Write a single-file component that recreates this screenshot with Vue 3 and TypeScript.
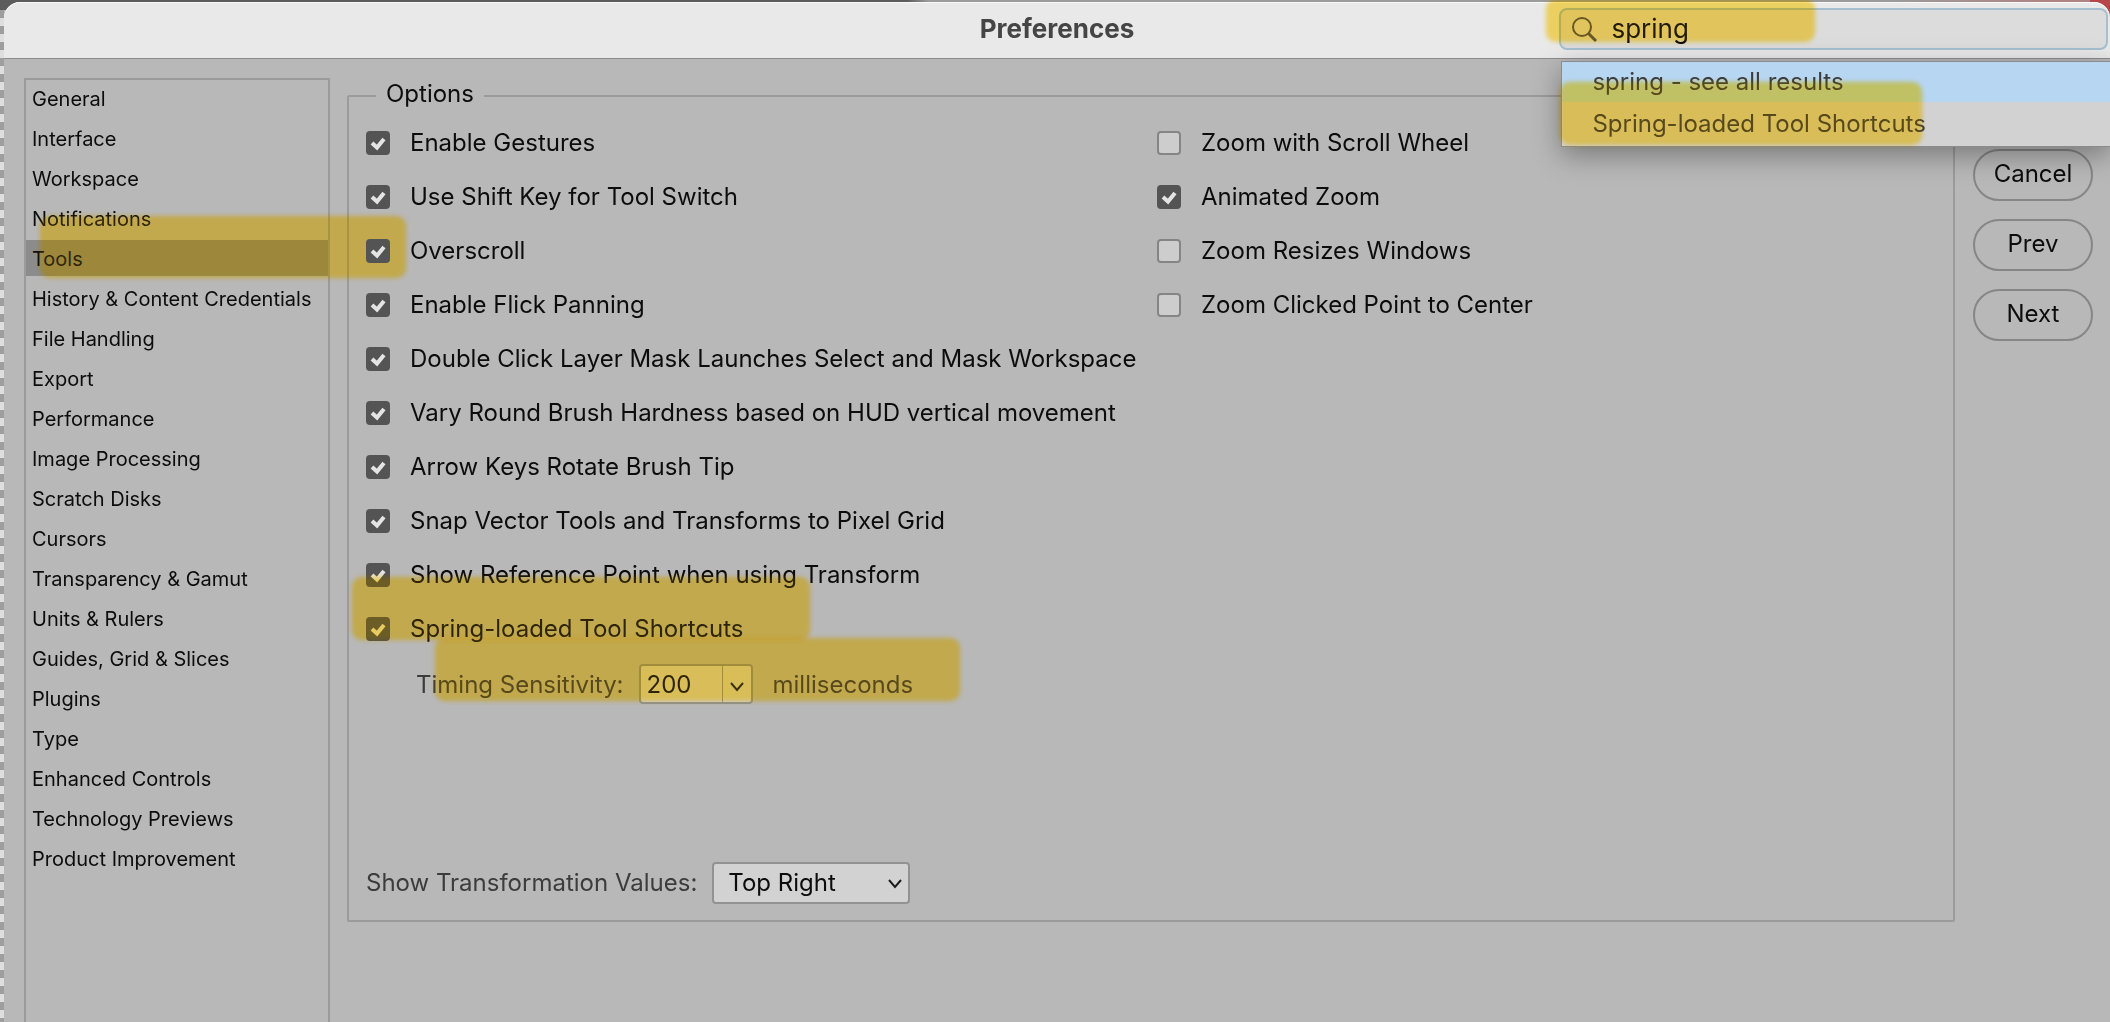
<script setup lang="ts">
import { ref } from 'vue'

interface Option {
  label: string
  checked: boolean
  marked?: boolean
}

const categories: string[] = [
  'General',
  'Interface',
  'Workspace',
  'Notifications',
  'Tools',
  'History & Content Credentials',
  'File Handling',
  'Export',
  'Performance',
  'Image Processing',
  'Scratch Disks',
  'Cursors',
  'Transparency & Gamut',
  'Units & Rulers',
  'Guides, Grid & Slices',
  'Plugins',
  'Type',
  'Enhanced Controls',
  'Technology Previews',
  'Product Improvement',
]

const current = ref('Tools')
const query = ref('spring')
const timing = ref('200')
const valuesPosition = ref('Top Right')

const leftOptions = ref<Option[]>([
  { label: 'Enable Gestures', checked: true },
  { label: 'Use Shift Key for Tool Switch', checked: true },
  { label: 'Overscroll', checked: true },
  { label: 'Enable Flick Panning', checked: true },
  { label: 'Double Click Layer Mask Launches Select and Mask Workspace', checked: true },
  { label: 'Vary Round Brush Hardness based on HUD vertical movement', checked: true },
  { label: 'Arrow Keys Rotate Brush Tip', checked: true },
  { label: 'Snap Vector Tools and Transforms to Pixel Grid', checked: true },
  { label: 'Show Reference Point when using Transform', checked: true },
  { label: 'Spring-loaded Tool Shortcuts', checked: true, marked: true },
])

const rightOptions = ref<Option[]>([
  { label: 'Zoom with Scroll Wheel', checked: false },
  { label: 'Animated Zoom', checked: true },
  { label: 'Zoom Resizes Windows', checked: false },
  { label: 'Zoom Clicked Point to Center', checked: false },
])
</script>

<template>
  <div class="desktop">
    <div class="dialog">
      <header class="titlebar">
        <h1 class="title">Preferences</h1>
        <div class="search">
          <label class="search-box">
            <svg class="search-icon" viewBox="0 0 28 28" aria-hidden="true">
              <circle cx="11" cy="12" r="9" />
              <path d="M17.5 18.5 L25 26" class="handle" />
            </svg>
            <input v-model="query" class="search-input" type="text" aria-label="Search preferences" />
          </label>
          <span class="marker marker-search" aria-hidden="true"></span>
          <ul class="results">
            <li><a class="result active" href="#all">spring - see all results</a></li>
            <li><a class="result" href="#spring">Spring-loaded Tool Shortcuts</a></li>
            <li class="marker marker-result" aria-hidden="true"></li>
          </ul>
        </div>
      </header>

      <main class="body">
        <nav class="sidebar">
          <div v-for="name in categories" :key="name" class="category">
            <a
              href="#panel"
              class="category-link"
              :class="{ selected: name === current }"
              @click.prevent="current = name"
            >{{ name }}</a>
            <span v-if="name === 'Tools'" class="marker marker-tools" aria-hidden="true"></span>
          </div>
        </nav>

        <fieldset class="options">
          <legend>Options</legend>
          <div class="columns">
            <div class="column">
              <div v-for="option in leftOptions" :key="option.label" class="row">
                <label class="check">
                  <input v-model="option.checked" type="checkbox" />
                  <svg class="tick" viewBox="0 0 24 24" aria-hidden="true">
                    <path d="M6 12 L11 16.5 L18 8" />
                  </svg>
                  <span>{{ option.label }}</span>
                </label>
                <span v-if="option.marked" class="marker marker-spring" aria-hidden="true"></span>
              </div>
              <div class="timing">
                <label for="timing">Timing Sensitivity:</label>
                <span class="combo">
                  <input id="timing" v-model="timing" type="text" />
                  <button type="button" aria-label="Choose timing">
                    <svg viewBox="0 0 14 14" aria-hidden="true"><path d="M1 4 L7 11 L13 4" /></svg>
                  </button>
                </span>
                <span>milliseconds</span>
                <span class="marker marker-timing" aria-hidden="true"></span>
              </div>
            </div>
            <div class="column">
              <div v-for="option in rightOptions" :key="option.label" class="row">
                <label class="check">
                  <input v-model="option.checked" type="checkbox" />
                  <svg class="tick" viewBox="0 0 24 24" aria-hidden="true">
                    <path d="M6 12 L11 16.5 L18 8" />
                  </svg>
                  <span>{{ option.label }}</span>
                </label>
              </div>
            </div>
          </div>
          <div class="transform">
            <label for="values">Show Transformation Values:</label>
            <span class="select">
              <select id="values" v-model="valuesPosition">
                <option>Top Right</option>
                <option>Top Left</option>
                <option>Bottom Right</option>
                <option>Bottom Left</option>
                <option>Never</option>
              </select>
              <svg viewBox="0 0 14 14" aria-hidden="true"><path d="M1 4 L7 11 L13 4" /></svg>
            </span>
          </div>
        </fieldset>

        <div class="actions">
          <button type="button">Cancel</button>
          <button type="button">Prev</button>
          <button type="button">Next</button>
        </div>
      </main>
    </div>
  </div>
</template>

<style>
html,
body {
  overflow: hidden;
  background: #b8b8b8;
}
</style>

<style scoped>
.desktop {
  box-sizing: border-box;
  display: flex;
  height: 100vh;
  padding: 2px 0 0 4px;
  font-family: Inter, 'Liberation Sans', sans-serif;
  font-size: 24px;
  line-height: 28px;
  color: #0c0c0c;
  background:
    linear-gradient(#b5474a, #b5474a) right top / 20px 30px no-repeat,
    linear-gradient(90deg, #5c5c5c 43%, #9b9b9b 44%, #9b9b9b 90%, #b08484 97%) left top / 100% 10px no-repeat,
    repeating-linear-gradient(#9e9e9e 0 8px, #dedede 8px 16px) left 10px / 4px 100% no-repeat;
}

.dialog {
  display: flex;
  flex: 1;
  flex-direction: column;
  min-width: 0;
}

.titlebar {
  box-sizing: border-box;
  display: grid;
  grid-template-columns: 1fr auto 1fr;
  align-items: center;
  height: 57px;
  padding-bottom: 2px;
  border-bottom: 1px solid #8c8c8c;
  border-radius: 16px 16px 0 0;
  background: #e9e9e9;
  box-shadow: inset 0 1px #fafafa;
}

.title {
  grid-column: 2;
  margin: 0;
  font-size: 26px;
  font-weight: 700;
  line-height: 28px;
  color: #454545;
}

.search {
  position: relative;
  justify-self: end;
  width: 26vw;
  margin-right: 2px;
}

.search-box {
  box-sizing: border-box;
  display: flex;
  align-items: center;
  gap: 12px;
  height: 42px;
  padding: 0 10px;
  border: 2px solid #a6bfd0;
  border-radius: 8px;
  background: #dcdcdc;
}

.search-icon {
  flex: none;
  width: 28px;
  height: 28px;
  fill: none;
  stroke: #505050;
  stroke-width: 2;
}

.search-icon .handle {
  stroke-width: 3;
}

.search-input {
  flex: 1;
  min-width: 0;
  height: 36px;
  padding: 0;
  border: 0;
  outline: 0;
  font: inherit;
  font-size: 26px;
  line-height: 36px;
  color: #000;
  background: none;
}

.results {
  position: absolute;
  top: 53px;
  right: -2px;
  left: 2px;
  margin: 0;
  padding: 0 0 2px;
  border: 1px solid #8c8c8c;
  border-right: 0;
  list-style: none;
  background: #d2d2d2;
  box-shadow: 0 8px 28px rgba(0, 0, 0, 0.35);
}

.result {
  display: block;
  padding: 8px 30px 6px;
  color: #3c3c3c;
  text-decoration: none;
}

.result.active {
  padding-top: 6px;
  background: #b6d6f2;
}

.body {
  display: flex;
  flex: 1;
  align-items: flex-start;
  padding: 19px 17px 0 20px;
  background: #b8b8b8;
}

.sidebar {
  box-sizing: border-box;
  display: flex;
  flex: none;
  flex-direction: column;
  align-self: stretch;
  gap: 4px;
  width: 306px;
  border: 2px solid #9b9b9b;
  border-bottom: 0;
  font-size: 20px;
}

.category {
  position: relative;
}

.category-link {
  display: block;
  padding: 5px 6px 3px;
  color: #0c0c0c;
  text-decoration: none;
  white-space: nowrap;
}

.category-link.selected {
  background: #8c8c8c;
}

.options {
  box-sizing: border-box;
  flex: 1;
  min-width: 0;
  margin: 2px 18px 0 17px;
  padding: 0 17px 16px;
  border: 2px solid #9b9b9b;
  border-radius: 2px;
}

.options legend {
  margin-left: 10px;
  padding: 0 10px 4px;
}

.columns {
  display: flex;
  gap: 12px;
  padding-top: 4px;
}

.column {
  flex: 1;
  min-width: 0;
}

.row,
.timing {
  position: relative;
  display: flex;
  align-items: center;
  height: 54px;
}

.check {
  display: flex;
  align-items: center;
  gap: 20px;
  white-space: nowrap;
}

.check input {
  box-sizing: border-box;
  width: 24px;
  height: 24px;
  margin: 0;
  border: 2px solid #858585;
  border-radius: 4px;
  appearance: none;
  background: #cdcdcd;
}

.check input:checked {
  border-color: #545454;
  background: #545454;
}

.tick {
  width: 24px;
  height: 24px;
  margin-left: -44px;
  fill: none;
  stroke: #e4e4e4;
  stroke-width: 4;
  visibility: hidden;
}

input:checked + .tick {
  visibility: visible;
}

.timing {
  height: 58px;
  padding-left: 50px;
  color: #3c3c3c;
}

.combo,
.select {
  box-sizing: border-box;
  display: flex;
  height: 40px;
  border: 2px solid #929292;
  border-radius: 4px;
  background: #d2d2d2;
}

.combo {
  width: 114px;
  margin: 0 20px 2px 15px;
}

.combo input {
  flex: 1;
  min-width: 0;
  padding: 2px 0 0 6px;
  border: 0;
  outline: 0;
  font: inherit;
  color: #0c0c0c;
  background: none;
}

.combo button {
  display: flex;
  align-items: center;
  justify-content: center;
  width: 29px;
  padding: 4px 0 0;
  border: 0;
  border-left: 1px solid #929292;
  background: none;
}

.combo svg,
.select svg {
  width: 14px;
  height: 14px;
  fill: none;
  stroke: #1c1c1c;
  stroke-width: 2;
}

.transform {
  display: flex;
  align-items: center;
  gap: 15px;
  padding-top: 148px;
  color: #3c3c3c;
}

.select {
  position: relative;
  align-items: center;
  width: 198px;
  height: 42px;
}

.select select {
  width: 100%;
  height: 100%;
  padding: 0 28px 0 14px;
  border: 0;
  appearance: none;
  font: inherit;
  color: #0c0c0c;
  background: none;
}

.select svg {
  position: absolute;
  right: 6px;
  pointer-events: none;
}

.actions {
  display: flex;
  flex: none;
  flex-direction: column;
  gap: 18px;
  width: 120px;
  padding-top: 71px;
}

.actions button {
  box-sizing: border-box;
  height: 52px;
  padding: 0 0 2px;
  border: 2px solid #868686;
  border-radius: 26px;
  font: inherit;
  color: #0c0c0c;
  background: none;
}

/* Highlighter strokes: a multiplied tint plus a thin wash over dark ink */
.marker {
  position: absolute;
  pointer-events: none;
}

.marker::before,
.marker::after {
  position: absolute;
  inset: 0;
  border-radius: 10px;
  content: '';
  filter: blur(2px);
}

.marker::before {
  background: #ffe678;
  mix-blend-mode: multiply;
}

.marker::after {
  background: rgba(255, 190, 20, 0.14);
}

.marker-search {
  top: -9px;
  left: -13px;
  width: 269px;
  height: 43px;
}

.marker-result {
  top: 20px;
  left: -2px;
  width: 362px;
  height: 63px;
}

.marker-tools {
  top: -24px;
  left: 14px;
  width: 366px;
  height: 62px;
}

.marker-spring {
  top: -25px;
  left: -14px;
  width: 458px;
  height: 63px;
}

.marker-timing {
  top: -18px;
  left: 69px;
  width: 525px;
  height: 63px;
}
</style>
